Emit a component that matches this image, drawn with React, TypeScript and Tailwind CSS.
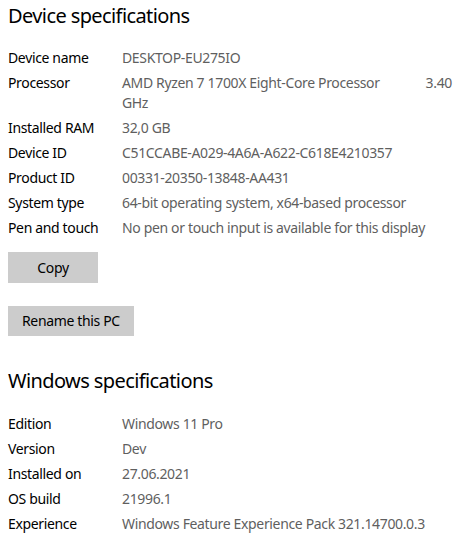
const deviceSpecs: { label: string; value: React.ReactNode }[] = [
  { label: 'Device name', value: 'DESKTOP-EU275IO' },
  {
    label: 'Processor',
    value: (
      <>
        <div className="flex justify-between">
          <span>AMD Ryzen 7 1700X Eight-Core Processor</span>
          <span>3.40</span>
        </div>
        <div>GHz</div>
      </>
    ),
  },
  { label: 'Installed RAM', value: '32,0 GB' },
  { label: 'Device ID', value: 'C51CCABE-A029-4A6A-A622-C618E4210357' },
  { label: 'Product ID', value: '00331-20350-13848-AA431' },
  { label: 'System type', value: '64-bit operating system, x64-based processor' },
  { label: 'Pen and touch', value: 'No pen or touch input is available for this display' },
];

const windowsSpecs = [
  { label: 'Edition', value: 'Windows 11 Pro' },
  { label: 'Version', value: 'Dev' },
  { label: 'Installed on', value: '27.06.2021' },
  { label: 'OS build', value: '21996.1' },
  { label: 'Experience', value: 'Windows Feature Experience Pack 321.14700.0.3' },
];

const SpecRow = ({ label, value }: { label: string; value: React.ReactNode }) => (
  <div className="flex">
    <div className="w-[114px] shrink-0 text-black">{label}</div>
    <div className="w-[330px] text-[#5f5f5f]">{value}</div>
  </div>
);

export default function App() {
  return (
    <div
      className="w-[468px] h-[537px] bg-white px-2 text-[14px] leading-[20px] tracking-[-0.35px] overflow-hidden"
      style={{ fontFamily: '"Noto Sans", "Open Sans", sans-serif' }}
    >
      <h2 className="text-[20px] leading-[28px] pt-[2px] tracking-[-0.6px] text-black">Device specifications</h2>
      <div className="mt-[18px] flex flex-col gap-[5px]">
        {deviceSpecs.map((s) => (
          <SpecRow key={s.label} label={s.label} value={s.value} />
        ))}
      </div>
      <div className="mt-[14px] flex flex-col items-start gap-[23px]">
        <button className="w-[90px] h-[31px] bg-[#cccccc] text-black">Copy</button>
        <button className="h-[30px] px-[14px] bg-[#cccccc] text-black">Rename this PC</button>
      </div>
      <h2 className="mt-[31px] text-[20px] leading-[28px] tracking-[-0.6px] text-black">Windows specifications</h2>
      <div className="mt-[19px] flex flex-col gap-[5px]">
        {windowsSpecs.map((s) => (
          <SpecRow key={s.label} label={s.label} value={s.value} />
        ))}
      </div>
    </div>
  );
}
